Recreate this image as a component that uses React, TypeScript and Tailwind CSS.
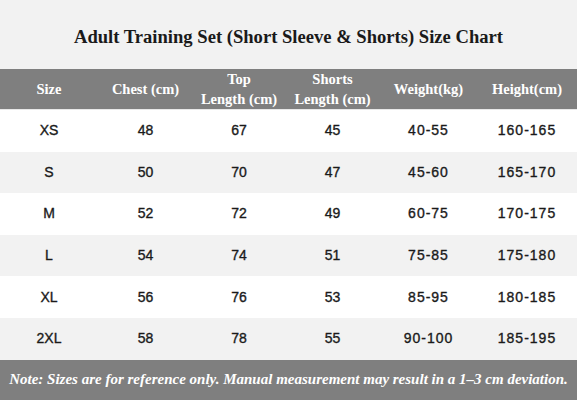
import React from "react";

const rows = [
  ["XS", "48", "67", "45", "40-55", "160-165"],
  ["S", "50", "70", "47", "45-60", "165-170"],
  ["M", "52", "72", "49", "60-75", "170-175"],
  ["L", "54", "74", "51", "75-85", "175-180"],
  ["XL", "56", "76", "53", "85-95", "180-185"],
  ["2XL", "58", "78", "55", "90-100", "185-195"],
];

const serif = { fontFamily: '"Liberation Serif", "Times New Roman", serif' };
const sans = { fontFamily: '"Liberation Sans", Arial, sans-serif' };

export default function App() {
  return (
    <div className="w-[577px] h-[400px] bg-white overflow-hidden flex flex-col">
      <div className="h-[69px] bg-[#f2f2f2] flex items-center justify-center pt-[6px]">
        <h1 style={serif} className="text-[18.6px] font-bold text-[#1a1a1a] leading-none">
          Adult Training Set (Short Sleeve &amp; Shorts) Size Chart
        </h1>
      </div>
      <div
        style={serif}
        className="h-[41px] bg-[#7f7f7f] grid grid-cols-[98px_95px_92px_95px_97px_1fr] items-center text-white font-bold text-[14.5px] leading-[20px] text-center border-b border-[#e8e8e8]"
      >
        <div>Size</div>
        <div>Chest (cm)</div>
        <div>
          Top
          <br />
          Length (cm)
        </div>
        <div>
          Shorts
          <br />
          Length (cm)
        </div>
        <div>Weight(kg)</div>
        <div>Height(cm)</div>
      </div>
      <div className="flex flex-col">
        {rows.map((r, i) => (
          <div
            key={r[0]}
            style={sans}
            className={
              "h-[41.6px] grid grid-cols-[98px_95px_92px_95px_97px_1fr] items-center text-center text-[14px] text-[#1a1a1a] [-webkit-text-stroke:0.35px_#1a1a1a] " +
              (i % 2 === 1 ? "bg-[#f2f2f2]" : "bg-white")
            }
          >
            {r.map((c, j) => (
              <div key={j} className={j >= 4 ? "tracking-[1px]" : ""}>
                {c}
              </div>
            ))}
          </div>
        ))}
      </div>
      <div className="flex-1 bg-[#7f7f7f] flex items-center justify-center">
        <p style={serif} className="text-white italic font-bold text-[15px] leading-none">
          Note: Sizes are for reference only. Manual measurement may result in a 1–3 cm deviation.
        </p>
      </div>
    </div>
  );
}
